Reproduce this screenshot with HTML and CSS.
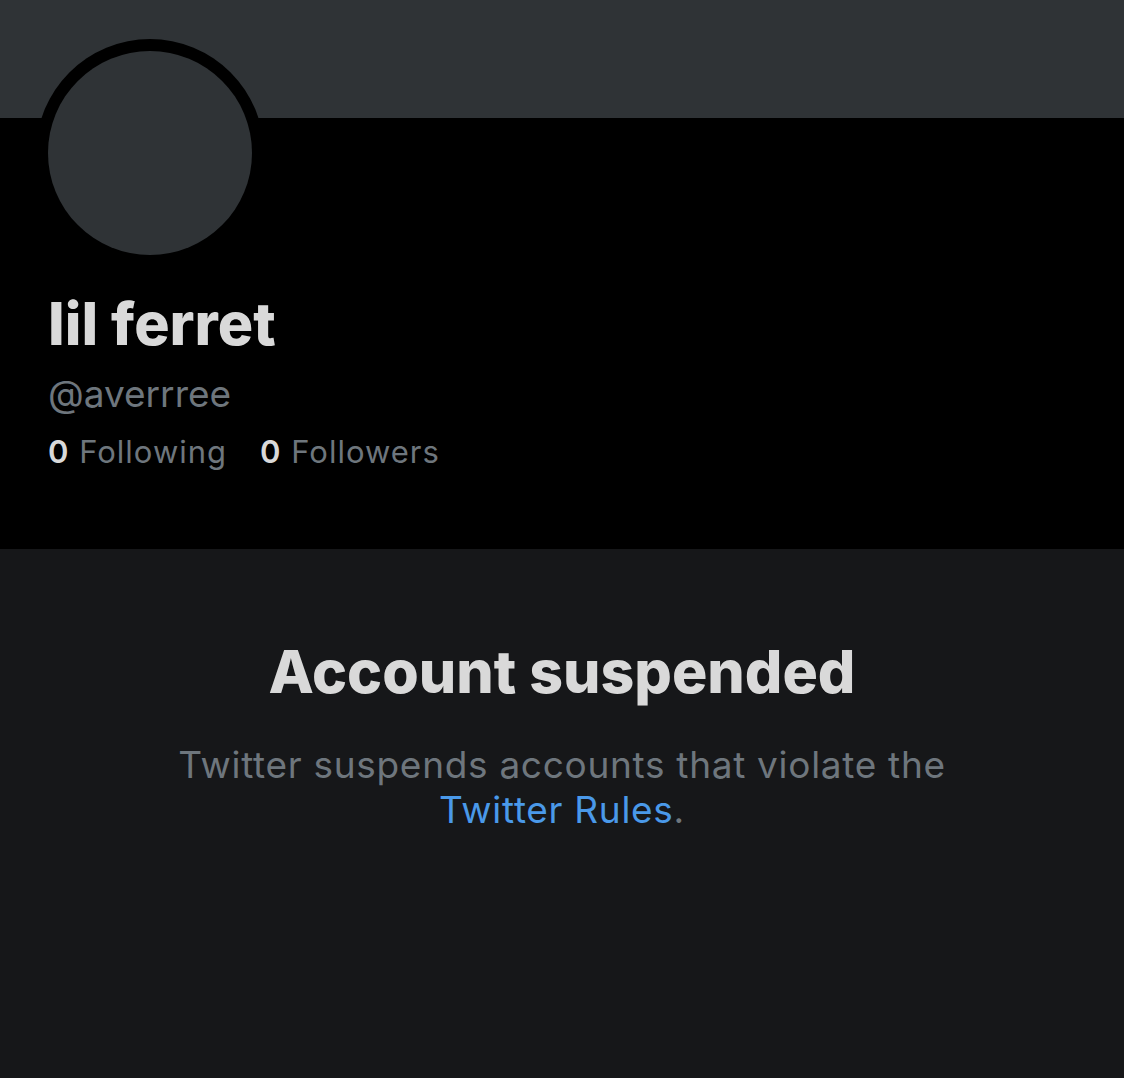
FILE: index.html
```html
<!DOCTYPE html>
<html lang="en">
<head>
<meta charset="utf-8">
<title>lil ferret (@averrree)</title>
<link rel="stylesheet" href="styles.css">
</head>
<body>
<div class="banner"></div>
<section class="profile">
  <div class="avatar"><div class="avatar-inner"></div></div>
  <h1 class="name">lil ferret</h1>
  <div class="handle">@averrree</div>
  <div class="stats">
    <span class="stat"><b>0</b> Following</span>
    <span class="stat"><b>0</b> Followers</span>
  </div>
</section>
<section class="suspended">
  <h2 class="title">Account suspended</h2>
  <p class="msg">Twitter suspends accounts that violate the<br><a class="link" href="#">Twitter Rules</a>.</p>
</section>
</body>
</html>
```

FILE: styles.css
```css
html, body {
  margin: 0;
  padding: 0;
  background: #161719;
  font-family: Inter, "Noto Sans", "Liberation Sans", sans-serif;
}
.banner {
  height: 118px;
  background: #2f3336;
}
.profile {
  display: flow-root;
  background: #000;
  height: 431px;
  padding-left: 36px;
  box-sizing: border-box;
}
.avatar {
  width: 228px;
  height: 228px;
  margin-top: -79px;
  border-radius: 50%;
  background: #000;
  padding: 12px;
  box-sizing: border-box;
}
.avatar-inner {
  width: 100%;
  height: 100%;
  border-radius: 50%;
  background: #2f3336;
}
.name {
  margin: 27px 0 0 12px;
  font-size: 59px;
  line-height: 1;
  font-weight: 800;
  color: #d9d9d9;
}
.handle {
  margin: 19px 0 0 12px;
  font-size: 37px;
  line-height: 1.2;
  color: #6e767d;
}
.stats {
  margin: 17px 0 0 12px;
  font-size: 31px;
  line-height: 1.2;
  letter-spacing: 1px;
  color: #6e767d;
  display: flex;
  gap: 33px;
}
.stats b {
  color: #d9d9d9;
  font-weight: 600;
}
.suspended {
  padding-top: 93px;
  text-align: center;
}
.title {
  margin: 0;
  font-size: 59px;
  line-height: 1;
  font-weight: 800;
  color: #d9d9d9;
}
.msg {
  margin: 41px 0 0;
  font-size: 37px;
  line-height: 45px;
  letter-spacing: 0.7px;
  color: #6e767d;
}
.link {
  color: #4a99e9;
  text-decoration: none;
}
```
